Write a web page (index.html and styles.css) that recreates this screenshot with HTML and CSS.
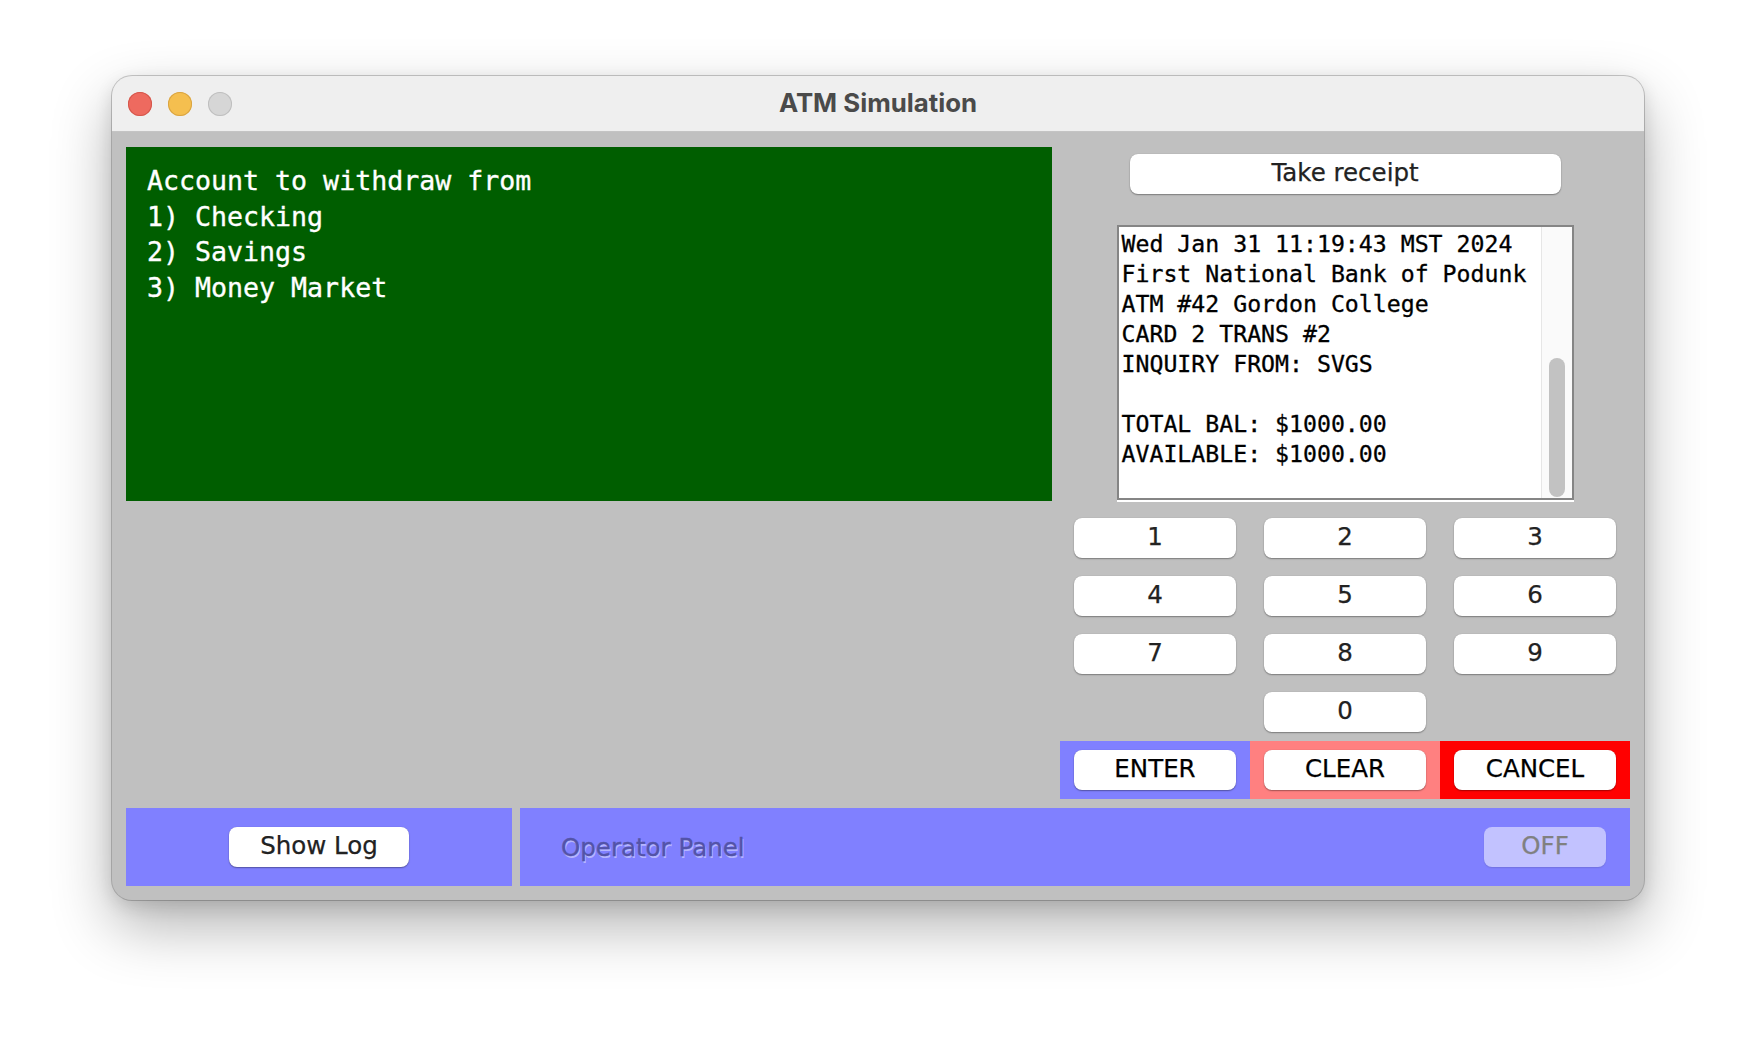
FILE: index.html
```html
<!DOCTYPE html>
<html>
<head>
<meta charset="utf-8">
<title>ATM Simulation</title>
<link rel="stylesheet" href="styles.css">
</head>
<body>
<div class="stage">
  <div class="window">
    <div class="titlebar">
      <div class="lights">
        <span class="light close"></span>
        <span class="light min"></span>
        <span class="light zoom"></span>
      </div>
      <div class="title">ATM Simulation</div>
      <div class="spacer"></div>
    </div>
    <div class="content">
      <div class="main">
        <div class="screen">Account to withdraw from
1) Checking
2) Savings
3) Money Market</div>
        <div class="side">
          <button class="btn receipt-btn">Take receipt</button>
          <div class="receipt">
            <div class="receipt-text">Wed Jan 31 11:19:43 MST 2024
First National Bank of Podunk
ATM #42 Gordon College
CARD 2 TRANS #2
INQUIRY FROM: SVGS

TOTAL BAL: $1000.00
AVAILABLE: $1000.00
</div>
            <div class="scrollbar"><div class="thumb"></div></div>
          </div>
          <div class="keypad">
            <div class="cell"><button class="btn key">1</button></div>
            <div class="cell"><button class="btn key">2</button></div>
            <div class="cell"><button class="btn key">3</button></div>
            <div class="cell"><button class="btn key">4</button></div>
            <div class="cell"><button class="btn key">5</button></div>
            <div class="cell"><button class="btn key">6</button></div>
            <div class="cell"><button class="btn key">7</button></div>
            <div class="cell"><button class="btn key">8</button></div>
            <div class="cell"><button class="btn key">9</button></div>
            <div class="cell"></div>
            <div class="cell"><button class="btn key">0</button></div>
            <div class="cell"></div>
            <div class="cell cell-enter"><button class="btn key action">ENTER</button></div>
            <div class="cell cell-clear"><button class="btn key action">CLEAR</button></div>
            <div class="cell cell-cancel"><button class="btn key action">CANCEL</button></div>
          </div>
        </div>
      </div>
      <div class="bottom">
        <div class="log-panel"><button class="btn log-btn">Show Log</button></div>
        <div class="op-panel">
          <span class="op-label">Operator Panel</span>
          <button class="btn off-btn">OFF</button>
        </div>
      </div>
    </div>
  </div>
</div>
</body>
</html>
```

FILE: styles.css
```css
* { box-sizing: border-box; }

html, body { margin: 0; }

body {
  background: #ffffff;
  width: 1756px;
  height: 1048px;
  overflow: hidden;
  font-family: "DejaVu Sans", sans-serif;
}

.stage {
  padding: 76px 0 0 112px;
}

.window {
  width: 1532px;
  height: 824px;
  border-radius: 20px;
  overflow: hidden;
  background: #c0c0c0;
  display: flex;
  flex-direction: column;
  box-shadow: 0 0 0 1px rgba(0, 0, 0, 0.2),
              0 26px 60px rgba(0, 0, 0, 0.30),
              0 6px 18px rgba(0, 0, 0, 0.12);
}

.titlebar {
  height: 56px;
  flex: none;
  background: #efefef;
  border-bottom: 1px solid #c4c4c4;
  display: grid;
  grid-template-columns: 1fr auto 1fr;
  align-items: center;
}

.lights {
  display: flex;
  gap: 16px;
  padding-left: 16px;
}

.light {
  width: 24px;
  height: 24px;
  border-radius: 50%;
}

.close { background: #ee6a5f; box-shadow: inset 0 0 0 1px #d4574c; }
.min { background: #f5bf4f; box-shadow: inset 0 0 0 1px #d9a443; }
.zoom { background: #d6d6d6; box-shadow: inset 0 0 0 1px #bfbfbf; }

.title {
  font-family: Inter, "Liberation Sans", sans-serif;
  font-weight: 700;
  font-size: 25.8px;
  color: #4a4a4a;
  margin-top: -2px;
}

.content {
  flex: 1;
  padding: 15px 14px 14px;
  display: flex;
  flex-direction: column;
}

.main {
  display: flex;
  gap: 8px;
  align-items: flex-start;
}

.screen {
  width: 926px;
  height: 354px;
  background: #005e00;
  color: #ffffff;
  font-family: "DejaVu Sans Mono", monospace;
  font-size: 26.6px;
  line-height: 35.5px;
  padding: 16px 0 0 21px;
  white-space: pre;
  -webkit-text-stroke: 0.35px #ffffff;
}

.side {
  width: 570px;
  display: flex;
  flex-direction: column;
  align-items: center;
}

.btn {
  font-family: "DejaVu Sans", sans-serif;
  font-size: 24.5px;
  background: #ffffff;
  color: #222222;
  border: none;
  border-radius: 8px;
  height: 40px;
  padding: 0 0 3px;
  -webkit-text-stroke: 0.25px currentColor;
  box-shadow: 0 1px 1.5px rgba(0, 0, 0, 0.35), 0 0 1px rgba(0, 0, 0, 0.2);
}

.receipt-btn {
  width: 431px;
  margin-top: 7px;
}

.receipt {
  width: 457px;
  height: 275px;
  margin-top: 31px;
  border: 2px solid #858585;
  background: #ffffff;
  display: flex;
  box-shadow: 0 2px 0 #ffffff;
}

.receipt-text {
  flex: 1;
  font-family: "DejaVu Sans Mono", monospace;
  font-size: 23.2px;
  line-height: 30px;
  padding: 2px 0 0 3px;
  white-space: pre;
  color: #000000;
  overflow: hidden;
  -webkit-text-stroke: 0.3px #000000;
}

.scrollbar {
  width: 31px;
  background: #fafafa;
  border-left: 1px solid #e6e6e6;
  display: flex;
  flex-direction: column;
  justify-content: flex-end;
  align-items: center;
  padding-bottom: 1px;
}

.thumb {
  width: 16px;
  height: 139px;
  border-radius: 8px;
  background: #c2c2c2;
}

.keypad {
  margin-top: 9px;
  display: grid;
  grid-template-columns: repeat(3, 190px);
  grid-template-rows: repeat(5, 58px);
}

.cell {
  display: flex;
  align-items: center;
  justify-content: center;
}

.key { width: 162px; }

.action { color: #000000; }

.cell-enter { background: #8080ff; }
.cell-clear { background: #ff8080; }
.cell-cancel { background: #ff0000; }

.bottom {
  margin-top: 9px;
  height: 78px;
  display: flex;
  gap: 8px;
}

.log-panel {
  width: 386px;
  background: #8080ff;
  display: flex;
  align-items: center;
  justify-content: center;
}

.log-btn { width: 180px; }

.op-panel {
  flex: 1;
  background: #8080ff;
  display: flex;
  align-items: center;
  justify-content: space-between;
  padding: 0 24px 0 41px;
}

.op-label {
  font-size: 24.5px;
  color: #5353a8;
  -webkit-text-stroke: 0.3px #5353a8;
  text-shadow: 1px 2px 0 rgba(200, 200, 255, 0.75);
}

.off-btn {
  width: 122px;
  background: #c2c2ff;
  color: #808080;
  box-shadow: 0 1px 1.5px rgba(0, 0, 0, 0.12);
}
```
